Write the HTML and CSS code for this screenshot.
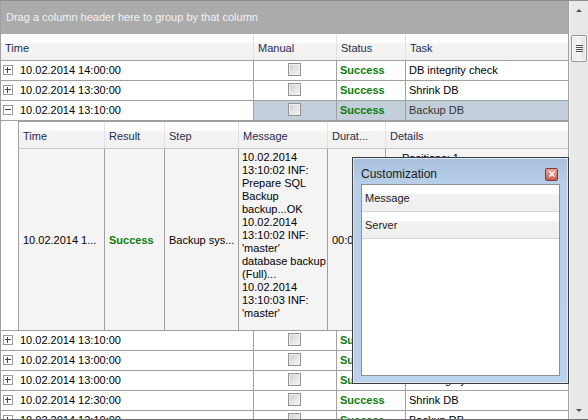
FILE: index.html
```html
<!DOCTYPE html>
<html>
<head>
<meta charset="utf-8">
<link rel="stylesheet" href="styles.css">
</head>
<body>
<div class="grid">
  <div class="main">
    <div class="group-panel">Drag a column header here to group by that column</div>
    <div class="hdr">
      <div class="hc">Time</div>
      <div class="hc">Manual</div>
      <div class="hc">Status</div>
      <div class="hc">Task</div>
    </div>
    <div class="row">
      <div class="c"><span class="exp"><span class="h"></span><span class="v"></span></span>10.02.2014 14:00:00</div>
      <div class="c man"><span class="chk"></span></div>
      <div class="c ok">Success</div>
      <div class="c">DB integrity check</div>
    </div>
    <div class="row">
      <div class="c"><span class="exp"><span class="h"></span><span class="v"></span></span>10.02.2014 13:30:00</div>
      <div class="c man"><span class="chk"></span></div>
      <div class="c ok">Success</div>
      <div class="c">Shrink DB</div>
    </div>
    <div class="row sel">
      <div class="c"><span class="exp"><span class="h"></span></span>10.02.2014 13:10:00</div>
      <div class="c man"><span class="chk"></span></div>
      <div class="c ok">Success</div>
      <div class="c task">Backup DB</div>
    </div>
    <div class="detail">
      <div class="indent"></div>
      <div class="dgrid">
        <div class="dhdr">
          <div class="dh">Time</div>
          <div class="dh">Result</div>
          <div class="dh">Step</div>
          <div class="dh">Message</div>
          <div class="dh">Durat...</div>
          <div class="dh">Details</div>
        </div>
        <div class="drow">
          <div class="dc mid">10.02.2014 1...</div>
          <div class="dc mid ok">Success</div>
          <div class="dc mid">Backup sys...</div>
          <div class="dc msg">10.02.2014<br>13:10:02 INF:<br>Prepare SQL<br>Backup<br>backup...OK<br>10.02.2014<br>13:10:02 INF:<br>'master'<br>database backup<br>(Full)...<br>10.02.2014<br>13:10:03 INF:<br>'master'</div>
          <div class="dc mid">00:00:05</div>
          <div class="dc det">Positions: 1</div>
        </div>
      </div>
    </div>
    <div class="row">
      <div class="c"><span class="exp"><span class="h"></span><span class="v"></span></span>10.02.2014 13:10:00</div>
      <div class="c man"><span class="chk"></span></div>
      <div class="c ok">Success</div>
      <div class="c">Backup DB</div>
    </div>
    <div class="row">
      <div class="c"><span class="exp"><span class="h"></span><span class="v"></span></span>10.02.2014 13:00:00</div>
      <div class="c man"><span class="chk"></span></div>
      <div class="c ok">Success</div>
      <div class="c">Shrink DB</div>
    </div>
    <div class="row">
      <div class="c"><span class="exp"><span class="h"></span><span class="v"></span></span>10.02.2014 13:00:00</div>
      <div class="c man"><span class="chk"></span></div>
      <div class="c ok">Success</div>
      <div class="c">DB integrity check</div>
    </div>
    <div class="row">
      <div class="c"><span class="exp"><span class="h"></span><span class="v"></span></span>10.02.2014 12:30:00</div>
      <div class="c man"><span class="chk"></span></div>
      <div class="c ok">Success</div>
      <div class="c">Shrink DB</div>
    </div>
    <div class="row last">
      <div class="c"><span class="exp"><span class="h"></span><span class="v"></span></span>10.02.2014 12:10:00</div>
      <div class="c man"><span class="chk"></span></div>
      <div class="c ok">Success</div>
      <div class="c">Backup DB</div>
    </div>
  </div>
  <div class="vscroll">
    <div class="arrow up"></div>
    <div class="track">
      <div class="thumb"><span></span><span></span><span></span><span></span></div>
    </div>
    <div class="arrow down"></div>
  </div>

  <div class="dialog">
    <div class="dtitle">
      <span>Customization</span>
      <span class="close"><svg width="10" height="10" viewBox="0 0 10 10"><path d="M2.5 2.5 L7.5 7.5 M7.5 2.5 L2.5 7.5" stroke="#fff" stroke-width="1.6"/></svg></span>
    </div>
    <div class="dlist">
      <div class="item">Message</div>
      <div class="item">Server</div>
    </div>
  </div>
</div>
</body>
</html>
```
FILE: styles.css
```css
* { box-sizing: border-box; }
html, body { margin: 0; padding: 0; }
body {
  width: 588px;
  height: 420px;
  overflow: hidden;
  background: #fff;
  font-family: "Liberation Sans", Arial, sans-serif;
  font-size: 11px;
  color: #000;
}
.grid {
  position: relative;
  display: flex;
  width: 588px;
  height: 420px;
  border-top: 1px solid #8c8c8c;
  border-left: 1px solid #a0a0a0;
  border-bottom: 1px solid #6f6f6f;
  overflow: hidden;
}
.main {
  width: 568px;
  flex: none;
  border-right: 1px solid #a0a0a0;
  overflow: hidden;
}
.group-panel {
  height: 33px;
  background: #ababab;
  color: #f2f2f2;
  padding: 10px 0 0 5px;
  line-height: 13px;
}
.hdr {
  display: grid;
  grid-template-columns: 253px 83px 69px 162px;
  height: 27px;
  border-bottom: 1px solid #a0a0a0;
  background: linear-gradient(#fff 0, #fff 9px, #f4f4f4 9px, #f1f1f1 100%);
}
.hc {
  color: #1e2d4b;
  padding: 8px 0 0 4px;
  border-right: 1px solid #e2e2e2;
}
.hc:last-child { border-right: none; }
.row {
  display: grid;
  grid-template-columns: 253px 83px 69px 162px;
  height: 20px;
  border-bottom: 1px solid #a0a0a0;
}
.row.last { border-bottom: none; }
.c {
  border-right: 1px solid #a0a0a0;
  padding: 3px 0 0 3px;
  line-height: 13px;
  white-space: nowrap;
  overflow: hidden;
  display: flex;
  align-items: flex-start;
}
.c:last-child { border-right: none; }
.c:first-child { padding-left: 2px; }
.row.sel .c:not(:first-child) { background: #c3cedb; }
.row.sel .task { color: #333; }
.ok { color: #0b7d0b; font-weight: bold; }
.man { justify-content: center; padding: 2px 0 0 0; }
.exp {
  position: relative;
  width: 10px;
  height: 10px;
  border: 1px solid #999;
  background: #fff;
  margin: 1px 7px 0 0;
  flex: none;
}
.exp .h {
  position: absolute;
  left: 1px; top: 3px;
  width: 6px; height: 1px;
  background: #444;
}
.exp .v {
  position: absolute;
  left: 3px; top: 1px;
  width: 1px; height: 6px;
  background: #444;
}
.chk {
  width: 13px;
  height: 13px;
  border: 1px solid #939393;
  background: linear-gradient(135deg, #cfcfcf, #f7f7f7);
  box-shadow: inset 0 0 0 1px #eee;
  margin-right: 1px;
}
.detail {
  display: flex;
  height: 210px;
  border-bottom: 1px solid #a0a0a0;
}
.indent { width: 17px; flex: none; }
.dgrid {
  flex: 1;
  border-left: 1px solid #a0a0a0;
  border-top: 1px solid #a0a0a0;
  display: flex;
  flex-direction: column;
}
.dhdr {
  display: grid;
  grid-template-columns: 86px 60px 74px 89px 58px 1fr;
  height: 27px;
  border-bottom: 1px solid #c8c8c8;
  background: linear-gradient(#fff 0, #fff 9px, #f4f4f4 9px, #f1f1f1 100%);
}
.dh {
  color: #1e2d4b;
  padding: 8px 0 0 4px;
  border-right: 1px solid #e2e2e2;
  white-space: nowrap;
}
.dh:last-child { border-right: none; }
.drow {
  flex: 1;
  display: grid;
  grid-template-columns: 86px 60px 74px 89px 58px 1fr;
  background: #f4f4f4;
}
.dc {
  border-right: 1px solid #a0a0a0;
  padding: 0 0 0 4px;
  white-space: nowrap;
  overflow: hidden;
}
.dc:last-child { border-right: none; }
.dc.mid { display: flex; align-items: center; }
.dc.msg {
  padding: 2px 0 0 3px;
  line-height: 13px;
}
.dc.det { padding: 3px 0 0 16px; }
.vscroll {
  width: 19px;
  flex: none;
  background: #e9e9e9;
  border-left: 1px solid #f4f4f4;
  display: flex;
  flex-direction: column;
}
.arrow { height: 18px; flex: none; display: flex; justify-content: center; align-items: center; }
.arrow.up::after {
  content: "";
  border-left: 3px solid transparent;
  border-right: 3px solid transparent;
  border-bottom: 3px solid #555;
}
.arrow.down::after {
  content: "";
  border-left: 3px solid transparent;
  border-right: 3px solid transparent;
  border-top: 3px solid #555;
}
.track { flex: 1; padding: 16px 0 0 1px; }
.thumb {
  width: 16px;
  height: 27px;
  border: 1px solid #979797;
  border-radius: 2px;
  background: linear-gradient(90deg, #e6e6e6, #f6f6f6 45%, #e0e0e0);
  box-shadow: inset 0 0 0 1px #fafafa;
  display: flex;
  flex-direction: column;
  align-items: center;
  justify-content: center;
  gap: 1px;
}
.thumb span { width: 7px; height: 1px; background: #555; display: block; }
.dialog {
  position: absolute;
  left: 351px;
  top: 156px;
  width: 217px;
  height: 227px;
  border: 1px solid #3d3d3d;
  background: linear-gradient(#a7c0dc 0, #b8cfe8 26px, #bad2ea 100%);
  box-shadow: inset 0 0 0 1px #dbe7f3;
  padding: 0 8px 7px 8px;
  display: flex;
  flex-direction: column;
}
.dtitle {
  height: 26px;
  flex: none;
  display: flex;
  align-items: center;
  justify-content: space-between;
  font-size: 12px;
  color: #1b1b1b;
  padding: 6px 0 0 0;
}
.close {
  width: 13px;
  height: 13px;
  border: 1px solid #7b3a35;
  border-radius: 2px;
  background: linear-gradient(#e7a597, #c5604f);
  display: flex;
  align-items: center;
  justify-content: center;
  margin-right: 2px;
}
.dlist {
  flex: 1;
  background: #fff;
  border: 1px solid #8f8f8f;
}
.item {
  height: 27px;
  padding: 7px 0 0 3px;
  border-bottom: 1px solid #d6d6d6;
  background: linear-gradient(#fff 0, #fff 9px, #f2f2f2 9px, #efefef 100%);
  color: #1b1b1b;
  line-height: 13px;
}
```
